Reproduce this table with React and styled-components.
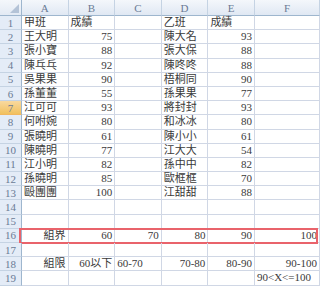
import React from 'react';
import styled, { createGlobalStyle } from 'styled-components';

const GlobalStyle = createGlobalStyle`
  html, body {
    margin: 0;
    padding: 0;
    background: #ffffff;
    overflow: hidden;
  }
`;

const Sheet = styled.div`
  width: 320px;
  height: 288px;
  overflow: hidden;
  font-family: "Liberation Serif", "Noto Sans CJK TC", serif;
  font-size: 11px;
  color: #3a3a3a;
`;

const Row = styled.div`
  position: relative;
  display: grid;
  grid-template-columns: 22px repeat(5, 46.6px) 1fr;
  height: ${({ $head }) => ($head ? '16px' : '14.2px')};
`;

const Corner = styled.div`
  position: relative;
  box-sizing: border-box;
  background: linear-gradient(180deg, #f4f7fb, #e3eaf4);
  border-right: 1px solid #9eb6ce;
  border-bottom: 1px solid #9eb6ce;

  &::after {
    content: '';
    position: absolute;
    right: 2px;
    bottom: 2px;
    width: 0;
    height: 0;
    border-left: 9px solid transparent;
    border-bottom: 9px solid #b4c3d7;
  }
`;

const ColHead = styled.div`
  box-sizing: border-box;
  display: flex;
  align-items: center;
  justify-content: center;
  background: linear-gradient(180deg, #f4f7fb, #e0e8f3);
  border-right: 1px solid #c5d3e3;
  border-bottom: 1px solid #9eb6ce;
  color: #6a7b95;
  font-size: 11px;
`;

const RowHead = styled.div`
  box-sizing: border-box;
  display: flex;
  align-items: center;
  justify-content: center;
  background: ${({ $active }) =>
    $active ? 'linear-gradient(180deg, #f9d99f, #f1c15f)' : '#e4ecf7'};
  border-right: 1px solid #9eb6ce;
  border-bottom: 1px solid ${({ $active }) => ($active ? '#f2b860' : '#c5d3e3')};
  color: #6a7b95;
  font-size: 11px;
`;

const Cell = styled.div`
  box-sizing: border-box;
  display: flex;
  align-items: center;
  justify-content: ${({ $align }) => ($align === 'right' ? 'flex-end' : 'flex-start')};
  padding: 0 2px;
  border-right: 1px solid #d0d7e5;
  border-bottom: 1px solid #d0d7e5;
  white-space: nowrap;
  overflow: visible;
  line-height: 1;
`;

const Highlight = styled.div`
  position: absolute;
  left: 19px;
  right: 2px;
  top: -1px;
  bottom: -1px;
  border: 2px solid #e9636b;
  pointer-events: none;
`;

const cols = ['A', 'B', 'C', 'D', 'E', 'F'];

const scores = [
  ['王大明', 75, '陳大名', 93],
  ['張小寶', 88, '張大保', 88],
  ['陳乓乓', 92, '陳咚咚', 88],
  ['吳果果', 90, '梧桐同', 90],
  ['孫董董', 55, '孫果果', 77],
  ['江可可', 93, '將封封', 93],
  ['何咐婉', 80, '和冰冰', 80],
  ['張曉明', 61, '陳小小', 61],
  ['陳曉明', 77, '江大大', 54],
  ['江小明', 82, '孫中中', 82],
  ['孫曉明', 85, '歐框框', 70],
  ['毆團團', 100, '江甜甜', 88],
];

const empty = () => [null, null, null, null, null, null];

const buildRows = () => {
  const rows = [];
  rows.push([
    { t: '甲班' }, { t: '成績' }, null, { t: '乙班' }, { t: '成績' }, null,
  ]);
  scores.forEach(([a, b, d, e]) => {
    rows.push([
      { t: a }, { t: b, r: true }, null, { t: d }, { t: e, r: true }, null,
    ]);
  });
  rows.push(empty());
  rows.push(empty());
  rows.push([
    { t: '組界', r: true }, { t: 60, r: true }, { t: 70, r: true },
    { t: 80, r: true }, { t: 90, r: true }, { t: 100, r: true },
  ]);
  rows.push(empty());
  rows.push([
    { t: '組限', r: true }, { t: '60以下', r: true }, { t: '60-70' },
    { t: '70-80', r: true }, { t: '80-90', r: true }, { t: '90-100', r: true },
  ]);
  rows.push([null, null, null, null, null, { t: '90<X<=100' }]);
  return rows;
};

const App = () => {
  const rows = buildRows();

  return (
    <>
      <GlobalStyle />
      <Sheet>
        <Row $head>
          <Corner />
          {cols.map(c => (
            <ColHead key={c}>{c}</ColHead>
          ))}
        </Row>
        {rows.map((cells, i) => (
          <Row key={i}>
            <RowHead $active={i + 1 === 7}>{i + 1}</RowHead>
            {cells.map((cell, j) => (
              <Cell key={j} $align={cell && cell.r ? 'right' : 'left'}>
                {cell ? cell.t : ''}
              </Cell>
            ))}
            {i + 1 === 16 && <Highlight />}
          </Row>
        ))}
      </Sheet>
    </>
  );
};

export default App;
